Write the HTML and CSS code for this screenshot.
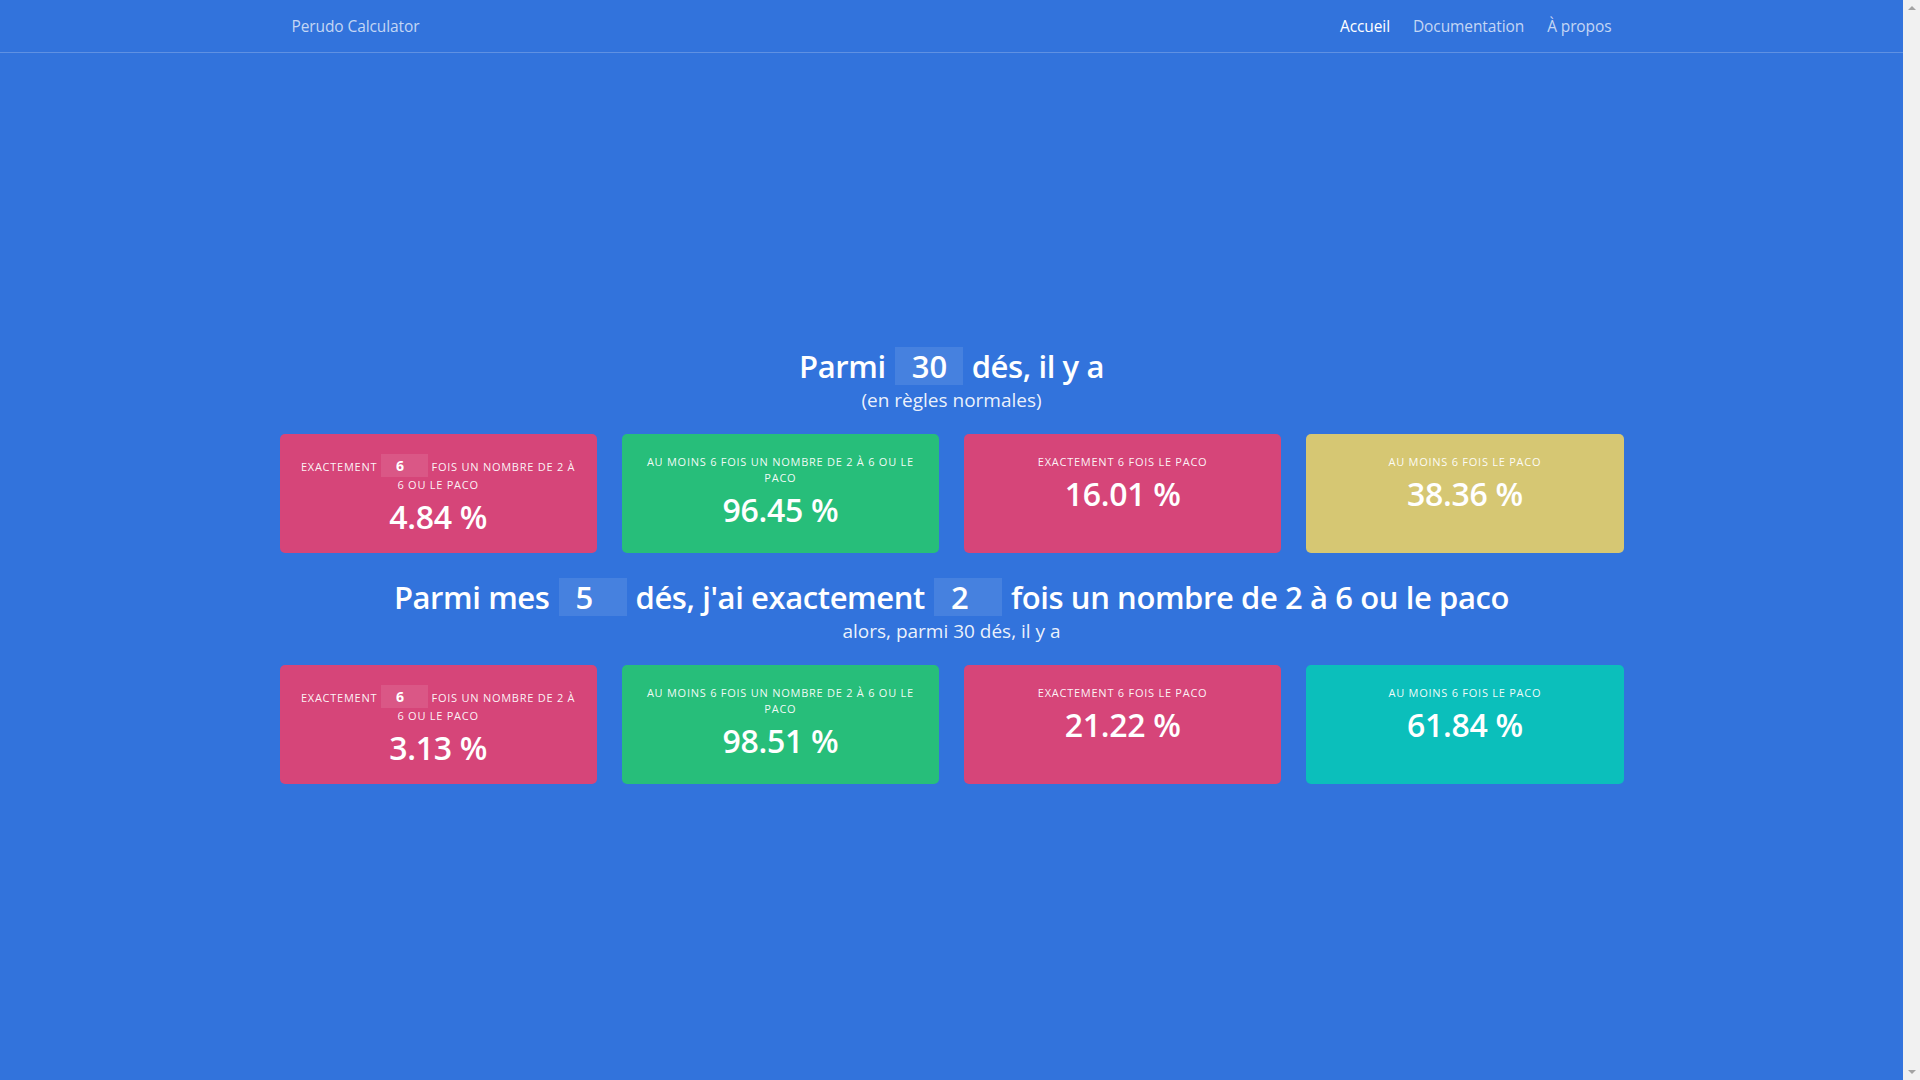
FILE: index.html
```html
<!DOCTYPE html>
<html lang="fr">
<head>
<meta charset="utf-8">
<title>Perudo Calculator</title>
<link rel="stylesheet" href="styles.css">
</head>
<body>
<div class="page">
<nav class="navbar">
  <div class="navbar-inner">
    <a class="brand" href="#">Perudo Calculator</a>
    <div class="nav-links">
      <a class="nav-link active" href="#">Accueil</a>
      <a class="nav-link" href="#">Documentation</a>
      <a class="nav-link" href="#">À propos</a>
    </div>
  </div>
</nav>
<main class="hero">
  <section class="block">
    <h1 class="title">Parmi <input class="num-input" type="text" value="30"> dés, il y a</h1>
    <p class="subtitle">(en règles normales)</p>
    <div class="cards">
      <div class="card card-pink">
        <p class="heading">Exactement <input class="mini-input" type="text" value="6"> fois un nombre de 2 à 6 ou le paco</p>
        <p class="value">4.84 %</p>
      </div>
      <div class="card card-green">
        <p class="heading">Au moins 6 fois un nombre de 2 à 6 ou le paco</p>
        <p class="value">96.45 %</p>
      </div>
      <div class="card card-pink">
        <p class="heading">Exactement 6 fois le paco</p>
        <p class="value">16.01 %</p>
      </div>
      <div class="card card-yellow">
        <p class="heading">Au moins 6 fois le paco</p>
        <p class="value">38.36 %</p>
      </div>
    </div>
  </section>
  <section class="block block-second">
    <h1 class="title">Parmi mes <input class="num-input" type="text" value="5"> dés, j'ai exactement <input class="num-input" type="text" value="2"> fois un nombre de 2 à 6 ou le paco</h1>
    <p class="subtitle">alors, parmi 30 dés, il y a</p>
    <div class="cards">
      <div class="card card-pink">
        <p class="heading">Exactement <input class="mini-input" type="text" value="6"> fois un nombre de 2 à 6 ou le paco</p>
        <p class="value">3.13 %</p>
      </div>
      <div class="card card-green">
        <p class="heading">Au moins 6 fois un nombre de 2 à 6 ou le paco</p>
        <p class="value">98.51 %</p>
      </div>
      <div class="card card-pink">
        <p class="heading">Exactement 6 fois le paco</p>
        <p class="value">21.22 %</p>
      </div>
      <div class="card card-teal">
        <p class="heading">Au moins 6 fois le paco</p>
        <p class="value">61.84 %</p>
      </div>
    </div>
  </section>
</main>
</div>
<div class="scrollbar" aria-hidden="true">
  <span class="sb-arrow sb-up"></span>
  <span class="sb-arrow sb-down"></span>
</div>
</body>
</html>
```
FILE: styles.css
```css
* { box-sizing: border-box; }

html, body {
  margin: 0;
  padding: 0;
}

body {
  background: #3273dc;
  color: #fff;
  font-family: "Open Sans", "Noto Sans", "DejaVu Sans", sans-serif;
  overflow: hidden;
}

.page {
  margin-right: 17px;
}

/* emulated classic scrollbar (html has overflow-y: scroll in the original) */
.scrollbar {
  position: fixed;
  top: 0;
  right: 0;
  width: 17px;
  height: 100vh;
  background: #f1f1f1;
  display: flex;
  flex-direction: column;
  justify-content: space-between;
  align-items: center;
  padding: 6px 0;
}

.sb-arrow {
  width: 0;
  height: 0;
  border-left: 4px solid transparent;
  border-right: 4px solid transparent;
}

.sb-up {
  border-bottom: 4px solid #a3a3a3;
}

.sb-down {
  border-top: 4px solid #a3a3a3;
}

.navbar {
  height: 53px;
  border-bottom: 1px solid rgba(255, 255, 255, 0.22);
}

.navbar-inner {
  width: 1320px;
  height: 52px;
  margin: 0 auto;
  display: flex;
  align-items: center;
  justify-content: space-between;
}

.brand,
.nav-link {
  color: rgba(255, 255, 255, 0.72);
  text-decoration: none;
  font-size: 15.5px;
  letter-spacing: -0.1px;
}

.nav-links {
  display: flex;
  gap: 23px;
}

.nav-link.active {
  color: #fff;
}

.hero {
  padding-top: 294px;
  padding-bottom: 200px;
}

.block {
  width: 1344px;
  margin: 0 auto;
}

.block-second {
  margin-top: 25px;
}

.title {
  margin: 0;
  height: 38px;
  display: flex;
  justify-content: center;
  align-items: center;
  gap: 9px;
  font-size: 31px;
  font-weight: 600;
  letter-spacing: -0.4px;
  line-height: 1;
}

.num-input {
  width: 68px;
  height: 38px;
  border: none;
  outline: none;
  background: rgba(255, 255, 255, 0.1);
  color: #fff;
  font-family: inherit;
  font-size: 31px;
  font-weight: 600;
  padding: 0 0 0 17px;
  margin: 0;
}

.subtitle {
  margin: 3px 0 0;
  text-align: center;
  font-size: 19px;
  line-height: 24px;
  color: rgba(255, 255, 255, 0.92);
}

.cards {
  margin-top: 22px;
  display: grid;
  grid-template-columns: repeat(4, 1fr);
  gap: 25px;
}

.card {
  border-radius: 5px;
  padding: 20px 19px 16px;
  text-align: center;
  min-height: 119px;
}

.card-pink { background: #d64579; }
.card-green { background: #27be7a; }
.card-yellow { background: #d6c773; }
.card-teal { background: #0bbfbb; }

.heading {
  margin: 0 0 6px;
  font-size: 11px;
  letter-spacing: 0.75px;
  line-height: 16px;
  text-transform: uppercase;
  color: rgba(255, 255, 255, 0.95);
}

.mini-input {
  width: 47px;
  height: 23px;
  border: none;
  outline: none;
  background: rgba(255, 255, 255, 0.1);
  color: #fff;
  font-family: inherit;
  font-size: 14px;
  font-weight: 700;
  padding: 0 0 0 15px;
  margin: 0;
  vertical-align: baseline;
}

.value {
  margin: 0;
  font-size: 32px;
  font-weight: 600;
  line-height: 36px;
  letter-spacing: -0.3px;
}
```
